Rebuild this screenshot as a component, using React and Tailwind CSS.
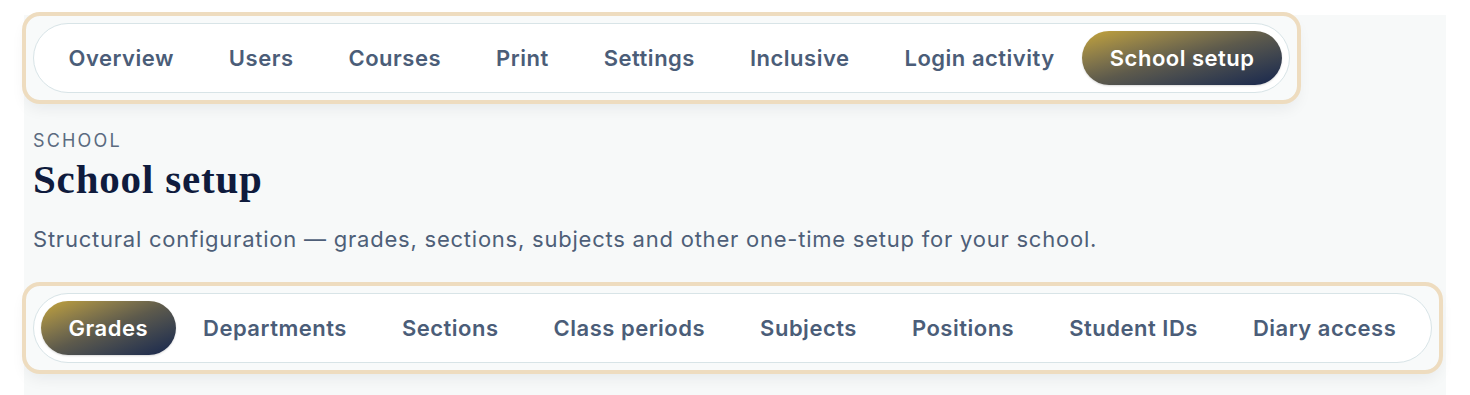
const topTabs = ['Overview', 'Users', 'Courses', 'Print', 'Settings', 'Inclusive', 'Login activity', 'School setup'];
const subTabs = ['Grades', 'Departments', 'Sections', 'Class periods', 'Subjects', 'Positions', 'Student IDs', 'Diary access'];

function TabBar({ tabs, active, className = '' }) {
  return (
    <div className={`w-fit rounded-[14px] bg-[#f8fafa] p-[7px] outline-4 outline-[#eedcbf] shadow-[0_8px_16px_rgba(15,23,42,0.07)] ${className}`}>
      <nav className="flex items-center rounded-full border border-[#d8e4e7] bg-white p-[7px]">
        {tabs.map((t) =>
          t === active ? (
            <button
              key={t}
              className="h-[54px] rounded-full bg-linear-to-br from-[#c4a437] via-[#5d5a4c] to-[#18264d] px-[27.5px] text-[22px] font-semibold tracking-[0.023em] text-white shadow-[0_1px_2px_rgba(0,0,0,0.15)]"
            >
              {t}
            </button>
          ) : (
            <button key={t} className="h-[54px] rounded-full px-[27.5px] text-[22px] font-semibold tracking-[0.023em] text-[#4b5d78]">
              {t}
            </button>
          )
        )}
      </nav>
    </div>
  );
}

export default function App() {
  return (
    <div className="min-h-[395px] bg-white pt-[15px] font-['Inter',sans-serif]">
      <div className="mx-[24px] min-h-[380px] bg-[#f7f9f9] pl-[2px] pt-px">
        <TabBar tabs={topTabs} active="School setup" />
        <div className="pl-[7px]">
          <div className="mt-[29px] text-[18px] leading-[24px] tracking-[0.12em] text-[#5b6b80]">SCHOOL</div>
          <h1 className="mt-[2px] font-['Liberation_Serif',serif] text-[41px] font-bold leading-[48px] tracking-[0.02em] text-[#0f1b3d]">
            School setup
          </h1>
          <p className="mt-[22px] text-[22px] leading-[28px] tracking-[0.035em] text-[#4e5f78]">
            Structural configuration — grades, sections, subjects and other one-time setup for your school.
          </p>
        </div>
        <TabBar tabs={subTabs} active="Grades" className="mt-[33px]" />
      </div>
    </div>
  );
}
